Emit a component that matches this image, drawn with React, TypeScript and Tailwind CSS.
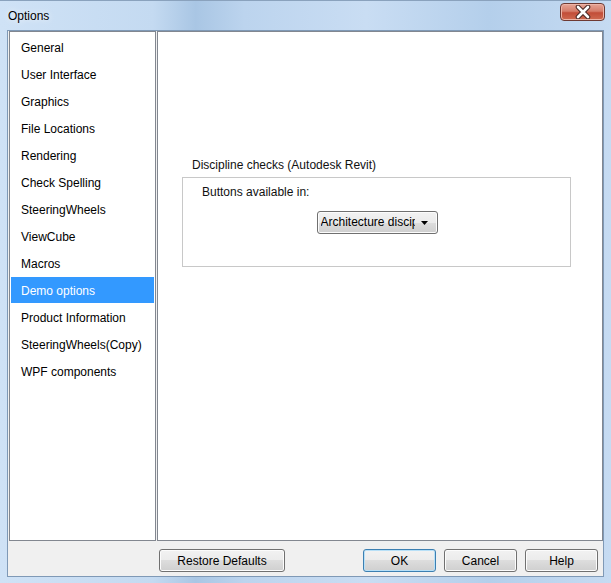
import React from "react";

const items = [
  "General",
  "User Interface",
  "Graphics",
  "File Locations",
  "Rendering",
  "Check Spelling",
  "SteeringWheels",
  "ViewCube",
  "Macros",
  "Demo options",
  "Product Information",
  "SteeringWheels(Copy)",
  "WPF components",
];

function Btn({ label, w, ml, def }: { label: string; w: string; ml: string; def?: boolean }) {
  return (
    <div
      className={`${w} ${ml} h-[23px] rounded-[3px] border flex items-center justify-center text-[#000] bg-[linear-gradient(to_bottom,#f2f2f2_0%,#ebebeb_50%,#dddddd_50%,#cfcfcf_100%)] ${
        def
          ? "border-[#3c7fb1] shadow-[inset_0_0_0_1px_#b8e0f7]"
          : "border-[#707070] shadow-[inset_0_0_0_1px_#fcfcfc]"
      }`}
    >
      {label}
    </div>
  );
}

export default function App() {
  return (
    <div className="w-[611px] h-[583px] flex flex-col border-t border-[#8aa2bd] bg-[linear-gradient(to_right,#cfe2f6_0%,#c4daf1_25%,#a9c6e4_32%,#bcd4ee_40%,#c9ddf3_60%,#b4cfeb_80%,#c6dbf2_100%)] font-['Liberation_Sans',Arial,sans-serif] text-[12px] text-black overflow-hidden">
      <div className="h-[29px] flex items-start shrink-0">
        <div className="pl-[8px] pt-[8px] leading-[15px] text-[12px] [text-shadow:0_0_6px_#ffffff]">Options</div>
        <div className="ml-auto mr-[6px] mt-[2px] w-[45px] h-[18px] rounded-[4px] border border-[#6e3a33] bg-[linear-gradient(to_bottom,#e6a596_0%,#d57d6a_45%,#c24d38_55%,#cf6a50_100%)] shadow-[inset_0_0_0_1px_#eeb4a6] flex items-center justify-center">
          <svg width="16" height="14" viewBox="0 0 16 14">
            <path d="M3 2 L13 12 M13 2 L3 12" stroke="#4a2a26" strokeWidth="4.6" strokeLinecap="round" />
            <path d="M3 2 L13 12 M13 2 L3 12" stroke="#ffffff" strokeWidth="2.6" strokeLinecap="round" />
          </svg>
        </div>
      </div>
      <div className="mx-[7px] h-[547px] flex flex-col bg-[#f0f0f0] border border-[#7f99b6] shrink-0">
        <div className="flex h-[510px]">
          <div className="ml-[1px] w-[147px] h-full border border-[#828790] bg-white pt-[2px] px-[1px]">
            {items.map((it) => (
              <div
                key={it}
                className={`h-[26px] mb-[1px] flex items-center pl-[10px] pt-[1px] ${
                  it === "Demo options" ? "bg-[#3399ff] text-white" : "text-[#000]"
                }`}
              >
                {it}
              </div>
            ))}
          </div>
          <div className="ml-[1px] flex-1 h-full border border-[#828790] bg-white">
            <div className="ml-[34px] mt-[126px] leading-[15px] text-[#111]">Discipline checks (Autodesk Revit)</div>
            <div className="ml-[24px] mt-[4px] w-[389px] h-[90px] border border-[#c8c8c8] flex flex-col">
              <div className="ml-[19px] mt-[7px] leading-[15px] text-[#111]">Buttons available in:</div>
              <div className="self-center mt-[11px] ml-[1px] w-[121px] h-[23px] rounded-[3px] border border-[#707070] shadow-[inset_0_0_0_1px_#fcfcfc] bg-[linear-gradient(to_bottom,#f2f2f2_0%,#ebebeb_50%,#dddddd_50%,#cfcfcf_100%)] flex items-center">
                <div className="ml-[3px] w-[94px] overflow-hidden whitespace-nowrap leading-[15px]">Architecture discip</div>
                <svg className="ml-[6px]" width="7" height="4" viewBox="0 0 7 4">
                  <path d="M0 0 H7 L3.5 4 Z" fill="#000" />
                </svg>
              </div>
            </div>
          </div>
        </div>
        <div className="flex mt-[8px] h-[23px]">
          <Btn label="Restore Defaults" w="w-[126px]" ml="ml-[151px]" />
          <Btn label="OK" w="w-[73px]" ml="ml-[78px]" def />
          <Btn label="Cancel" w="w-[73px]" ml="ml-[8px]" />
          <Btn label="Help" w="w-[73px]" ml="ml-[8px]" />
        </div>
      </div>
    </div>
  );
}
